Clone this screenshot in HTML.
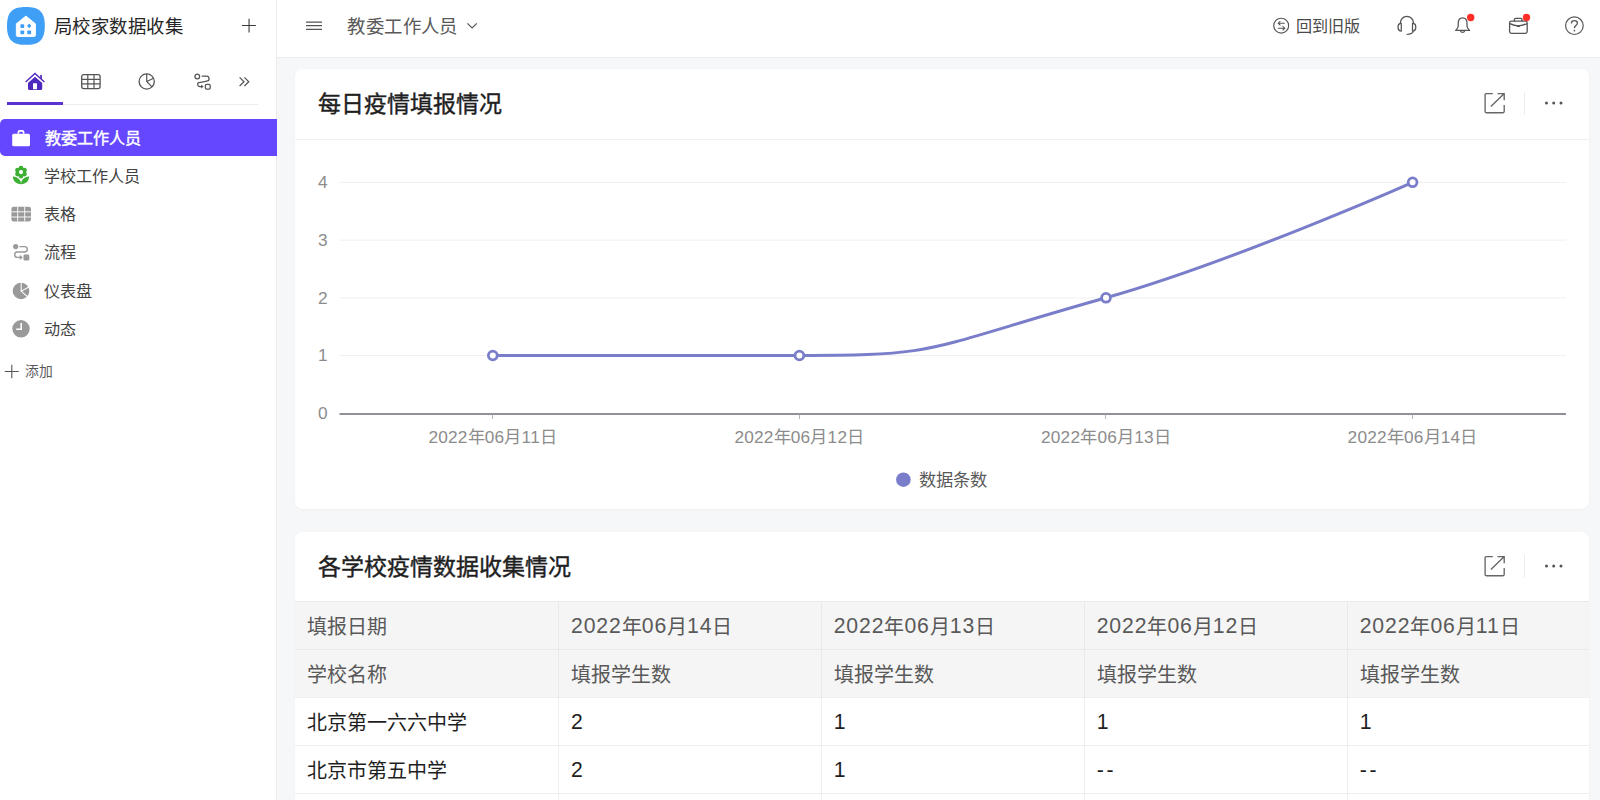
<!DOCTYPE html>
<html lang="zh-CN">
<head>
<meta charset="utf-8">
<title>局校家数据收集</title>
<style>
*{box-sizing:border-box;margin:0;padding:0}
html,body{width:1600px;height:800px;overflow:hidden;background:#f6f7f9;font-family:"Liberation Sans",sans-serif;color:#262626}
.abs{position:absolute}
#sidebar{position:absolute;left:0;top:0;width:277px;height:800px;background:#fff;border-right:1px solid #ebebec}
#header{position:absolute;left:277px;top:0;width:1323px;height:58px;background:#fff;border-bottom:1px solid #ecedef}
.appname{position:absolute;left:53.6px;top:14px;font-size:18.4px;letter-spacing:0.5px;line-height:26px;color:#262626;white-space:nowrap}
.tabline{position:absolute;left:7px;top:103.5px;width:251px;height:1px;background:#ececec}
.tabactive{position:absolute;left:7px;top:102px;width:56px;height:2.6px;background:#5a32d2}
.item{position:absolute;left:0;width:276.8px;height:37px;font-size:16.1px;line-height:37px;color:#434343;white-space:nowrap}
.item span{position:absolute;left:44px;top:0.8px}
.item.sel span{left:44.5px;top:1px}
.item.sel{background:#6547ff;color:#fff;font-weight:500;-webkit-text-stroke:0.4px #fff;letter-spacing:0.15px;border-radius:5px 0 0 5px}
.item svg{position:absolute}
.add{position:absolute;left:25.3px;top:362.3px;letter-spacing:0.2px;font-size:13.8px;line-height:20px;color:#595959}
.htitle{position:absolute;left:70.3px;top:14.1px;font-size:18.4px;letter-spacing:0.42px;line-height:26px;color:#595959;white-space:nowrap}
.hback{position:absolute;left:1018.6px;top:15px;font-size:16.1px;line-height:22px;color:#4a4a4a;white-space:nowrap}
.card{position:absolute;left:294.5px;width:1294.5px;background:#fff;border-radius:8px;box-shadow:0 1px 3px rgba(0,0,0,0.03)}
.ctitle{position:absolute;left:23.5px;font-size:23px;line-height:32px;font-weight:500;-webkit-text-stroke:0.42px #1f1f1f;color:#1f1f1f;white-space:nowrap}
.csep{position:absolute;left:0;width:100%;height:1px;background:#f0f0f0}
.vsep{position:absolute;width:1px;height:23px;background:#ececec}
table{position:absolute;left:0;top:69.5px;border-collapse:collapse;table-layout:fixed;width:1294.5px}
td{height:48px;border-top:1px solid #efefef;border-right:1px solid #efefef;padding:0 0 0 12px;font-size:20px;white-space:nowrap;color:#1f1f1f;vertical-align:middle}
td i{font-style:normal;letter-spacing:0.9px;font-size:21.2px;position:relative;top:1px;line-height:20px}
tr.h td i{top:-1.5px}
td i.m{letter-spacing:2.8px}
td:last-child{border-right:none}
tr.h td{background:#f5f5f5;color:#595959;border-color:#e9e9e9}
</style>
</head>
<body>
<div id="sidebar">
  <!-- logo -->
  <svg class="abs" style="left:6.9px;top:6.9px" width="37.8" height="37.8" viewBox="0 0 40 40">
    <path d="M20 0C33 0 40 4 40 20C40 36 33 40 20 40C7 40 0 36 0 20C0 4 7 0 20 0Z" fill="#3f9ef6"/>
    <path d="M20 9.6L30.1 17.8V30Q30.1 31.2 28.9 31.2H11.1Q9.9 31.2 9.9 30V17.8Z" fill="#fff" stroke="#fff" stroke-width="1" stroke-linejoin="round"/>
    <rect x="14.2" y="18.3" width="4" height="4" rx="0.8" fill="#3f9ef6"/>
    <rect x="21.8" y="18.3" width="3.4" height="3.4" rx="0.6" fill="#3f9ef6" transform="rotate(45 23.5 20)"/>
    <rect x="14.2" y="24.8" width="4" height="4" rx="0.8" fill="#3f9ef6"/>
    <rect x="21.5" y="24.8" width="4" height="4" rx="0.8" fill="#3f9ef6"/>
  </svg>
  <div class="appname">局校家数据收集</div>
  <svg class="abs" style="left:241px;top:18px" width="16" height="16" viewBox="0 0 16 16"><path d="M8.05 0.8V14.6M1 7.5H14.9" stroke="#3a3a3a" stroke-width="1.1" fill="none"/></svg>

  <!-- tabs -->
  <svg class="abs" style="left:25px;top:72px" width="21" height="20" viewBox="0 0 21 20">
    <path d="M0.6 9.9L10 1.5L19.4 9.9" fill="none" stroke="#4f29be" stroke-width="1.35"/>
    <rect x="15.2" y="2.9" width="1.7" height="4" fill="#4f29be"/>
    <path d="M10 4.8L17.2 11.1V16.6Q17.2 18.1 15.7 18.1H4.5Q3 18.1 3 16.6V11.1Z" fill="#4f29be"/>
    <rect x="8" y="11.2" width="4" height="6.1" rx="0.4" fill="#fff"/>
  </svg>
  <svg class="abs" style="left:80px;top:73px" width="22" height="18" viewBox="0 0 22 18">
    <rect x="1.7" y="1.6" width="18.4" height="14" rx="2" fill="none" stroke="#555" stroke-width="1.3"/>
    <path d="M1.7 6.3H20.1M1.7 10.9H20.1M7.8 1.6V15.6M14 1.6V15.6" stroke="#555" stroke-width="1.2" fill="none"/>
  </svg>
  <svg class="abs" style="left:137px;top:72px" width="20" height="20" viewBox="0 0 20 20">
    <circle cx="9.7" cy="9.5" r="7.6" fill="none" stroke="#555" stroke-width="1.3"/>
    <path d="M9.7 1.9V9.5L15 14.9M9.7 9.5L16.6 6.3" stroke="#555" stroke-width="1.2" fill="none"/>
  </svg>
  <svg class="abs" style="left:193px;top:72px" width="20" height="20" viewBox="0 0 20 20">
    <circle cx="4.3" cy="4.4" r="2.35" fill="none" stroke="#555" stroke-width="1.25"/>
    <path d="M9.2 4.2H13.4A2.5 2.5 0 0 1 13.7 9.2C11.2 9.7 9 10 6.6 10.4A2.05 2.05 0 0 0 6.8 14.5H9" stroke="#555" stroke-width="1.25" fill="none" stroke-linecap="round"/>
    <path d="M8.1 12.5L10.6 14.5L8.1 16.5Z" fill="#555"/>
    <rect x="12.4" y="12.3" width="4.8" height="4.8" rx="1.1" fill="none" stroke="#555" stroke-width="1.25"/>
  </svg>
  <svg class="abs" style="left:238px;top:76px" width="12" height="12" viewBox="0 0 12 12"><path d="M1.6 1.4L6 5.7L1.6 10M6.4 1.4L10.8 5.7L6.4 10" stroke="#555" stroke-width="1.2" fill="none"/></svg>
  <div class="tabline"></div>
  <div class="tabactive"></div>

  <!-- items -->
  <div class="item sel" style="top:118.8px">
    <svg style="left:11px;top:9px" width="20" height="20" viewBox="0 0 20 20"><path d="M7.4 5.8V4.3Q7.4 2.9 8.8 2.9H11.2Q12.6 2.9 12.6 4.3V5.8" fill="none" stroke="#fff" stroke-width="1.7"/><rect x="1.2" y="5.7" width="17.8" height="12.6" rx="1.6" fill="#fff"/></svg>
    <span>教委工作人员</span></div>
  <div class="item" style="top:157px">
    <svg style="left:11px;top:8.1px" width="20" height="20" viewBox="0 0 20 20">
      <g fill="#3db034"><circle cx="10" cy="3.2" r="2.45"/><circle cx="10" cy="11" r="2.45"/><circle cx="6.62" cy="5.15" r="2.45"/><circle cx="13.38" cy="5.15" r="2.45"/><circle cx="6.62" cy="9.05" r="2.45"/><circle cx="13.38" cy="9.05" r="2.45"/><circle cx="10" cy="7.1" r="3.8"/>
      <path d="M1.9 11.6C1.9 16 5 19.2 10 19.2C10 15 7 12 1.9 11.6Z"/><path d="M18.1 11.6C18.1 16 15 19.2 10 19.2C10 15 13 12 18.1 11.6Z"/></g>
      <circle cx="10" cy="7.1" r="2.1" fill="#fff"/></svg>
    <span>学校工作人员</span></div>
  <div class="item" style="top:195.4px">
    <svg style="left:11px;top:10.5px" width="21" height="16" viewBox="0 0 21 16"><rect x="0.4" y="0.8" width="19.6" height="14.7" rx="2.2" fill="#9a9a9a"/><path d="M6.7 0.8V15.5M13.7 0.8V15.5M0.4 5.8H20M0.4 11H20" stroke="#fff" stroke-width="0.9" fill="none"/></svg>
    <span>表格</span></div>
  <div class="item" style="top:233.7px">
    <svg style="left:11px;top:8.5px" width="20" height="20" viewBox="0 0 20 20"><circle cx="4.7" cy="4.6" r="2.6" fill="#999"/><path d="M8.4 4.6H13.6A2.7 2.7 0 0 1 13.6 10H6.4A2.7 2.7 0 0 0 6.4 15.4H10" fill="none" stroke="#999" stroke-width="1.4"/><path d="M8.8 12.8L11.8 15.4L8.8 18Z" fill="#999"/><rect x="12.5" y="12.6" width="5.8" height="5.8" rx="1.2" fill="#999"/></svg>
    <span>流程</span></div>
  <div class="item" style="top:272px">
    <svg style="left:11px;top:8.5px" width="20" height="20" viewBox="0 0 20 20"><circle cx="10" cy="10" r="8.3" fill="#999"/><path d="M10.2 1V10.2L18.4 5.8M10.2 10.2L16.6 15.8" fill="none" stroke="#fff" stroke-width="1.05"/></svg>
    <span>仪表盘</span></div>
  <div class="item" style="top:310.4px">
    <svg style="left:11px;top:8.5px" width="20" height="20" viewBox="0 0 20 20"><circle cx="10" cy="9.8" r="8.7" fill="#999"/><path d="M10.2 4V10.2H5.2" fill="none" stroke="#fff" stroke-width="1.6"/></svg>
    <span>动态</span></div>
  <svg class="abs" style="left:4px;top:364px" width="16" height="16" viewBox="0 0 16 16"><path d="M7.8 0.8V14.2M0.8 7.5H14.8" stroke="#555" stroke-width="1.1" fill="none"/></svg>
  <div class="add">添加</div>
</div>

<div id="header">
  <svg class="abs" style="left:28px;top:17px" width="18" height="18" viewBox="0 0 18 18"><path d="M1 5.1H17M1 8.6H17M1 12.4H17" stroke="#555" stroke-width="1.15" fill="none"/></svg>
  <div class="htitle">教委工作人员</div>
  <svg class="abs" style="left:189px;top:21px" width="12" height="10" viewBox="0 0 12 10"><path d="M1.4 2.3L6.1 7L10.8 2.3" stroke="#555" stroke-width="1.2" fill="none"/></svg>
  <!-- swap -->
  <svg class="abs" style="left:994px;top:16px" width="20" height="20" viewBox="0 0 20 20"><circle cx="10.2" cy="9.7" r="7.45" fill="none" stroke="#555" stroke-width="1.15"/><path d="M13.8 7.2H7.2M9.4 5L7.2 7.2L9.4 9.4M6.8 12.2H13.8M11.6 10L13.8 12.2L11.6 14.4" fill="none" stroke="#555" stroke-width="1.05"/></svg>
  <div class="hback">回到旧版</div>
  <!-- headset -->
  <svg class="abs" style="left:1119px;top:14px" width="22" height="22" viewBox="0 0 22 22"><path d="M4.4 9.6V8.8A6.5 6.5 0 0 1 17.4 8.8V9.6" fill="none" stroke="#555" stroke-width="1.25"/><path d="M5.3 9.4H4.5Q2 9.8 2 13.2Q2 16.6 4.5 17H5.3Z" fill="none" stroke="#555" stroke-width="1.25" stroke-linejoin="round"/><path d="M16.5 9.4H17.3Q19.8 9.8 19.8 13.2Q19.8 16.6 17.3 17H16.5Z" fill="none" stroke="#555" stroke-width="1.25" stroke-linejoin="round"/><path d="M17.4 17.2Q16.6 20.2 10.6 20.5" fill="none" stroke="#555" stroke-width="1.25"/></svg>
  <!-- bell -->
  <svg class="abs" style="left:1176px;top:12px" width="24" height="24" viewBox="0 0 24 24"><path d="M9.6 5.9C6.6 5.9 5.2 8.4 5.2 11.4V14.2C5.2 16 3.8 17.2 2.6 18.4H16.6C15.4 17.2 14 16 14 14.2V11.4C14 8.4 12.6 5.9 9.6 5.9Z" fill="none" stroke="#555" stroke-width="1.25" stroke-linejoin="round"/><path d="M7.5 18.9A2.2 2.2 0 0 0 11.7 18.9" fill="none" stroke="#555" stroke-width="1.2"/><circle cx="17.7" cy="5.5" r="3.7" fill="#ff2e26"/></svg>
  <!-- case -->
  <svg class="abs" style="left:1230px;top:12px" width="24" height="24" viewBox="0 0 24 24"><path d="M7.4 9.4V7.6Q7.4 6.4 8.6 6.4H13.8Q15 6.4 15 7.6V9.4" fill="none" stroke="#555" stroke-width="1.3"/><rect x="2.6" y="9.2" width="17.6" height="12.2" rx="1.8" fill="none" stroke="#555" stroke-width="1.3"/><path d="M2.8 11.6Q11.4 16 20 11.6" fill="none" stroke="#555" stroke-width="1.3"/><path d="M9.8 14.2H13" stroke="#555" stroke-width="1.6"/><circle cx="19.5" cy="5.5" r="3.7" fill="#ff2e26"/></svg>
  <!-- help -->
  <svg class="abs" style="left:1286px;top:15px" width="22" height="22" viewBox="0 0 22 22"><circle cx="11.4" cy="10.7" r="8.8" fill="none" stroke="#555" stroke-width="1.2"/><path d="M8.4 8.4Q8.4 5.6 11.4 5.6Q14.4 5.6 14.4 8.2Q14.4 9.6 12.8 10.6Q11.4 11.6 11.4 13.2" fill="none" stroke="#555" stroke-width="1.3"/><circle cx="11.4" cy="15.6" r="0.9" fill="#555"/></svg>
</div>

<!-- card 1 -->
<div class="card" id="c1" style="top:68.5px;height:440px">
  <div class="ctitle" style="top:19px">每日疫情填报情况</div>
  <div class="csep" style="top:70px"></div>
  <div class="vsep" style="left:1229.5px;top:23.5px"></div>
  <svg class="abs" style="left:1188.5px;top:22.3px" width="24" height="24" viewBox="0 0 24 24"><path d="M9.8 2.6H3.2Q2.1 2.6 2.1 3.7V20.6Q2.1 21.7 3.2 21.7H20.1Q21.2 21.7 21.2 20.6V14" fill="none" stroke="#666" stroke-width="1.35"/><path d="M14.5 2.6H21.2V9.3M21 2.8L7.9 15.6" fill="none" stroke="#666" stroke-width="1.35"/></svg>
  <svg class="abs" style="left:1247.5px;top:30.5px" width="24" height="8" viewBox="0 0 24 8"><circle cx="4.5" cy="4" r="1.5" fill="#555"/><circle cx="11.7" cy="4" r="1.5" fill="#555"/><circle cx="19" cy="4" r="1.5" fill="#555"/></svg>

</div>


<!-- chart -->
<svg class="abs" style="left:0;top:0;pointer-events:none" width="1600" height="520" viewBox="0 0 1600 520" font-family="Liberation Sans, sans-serif">
  <g stroke="#f0f0f0" stroke-width="1">
    <path d="M339.5 182.4H1566M339.5 240.1H1566M339.5 297.9H1566M339.5 355.6H1566"/>
  </g>
  <path d="M339.5 413.9H1566" stroke="#6b6b76" stroke-width="1.5"/>
  <path d="M492.5 414.5V419M799.5 414.5V419M1105.5 414.5V419M1412.5 414.5V419" stroke="#b5b5b5" stroke-width="1"/>
  <g fill="#8c8c8c" font-size="17.25" text-anchor="end">
    <text x="327.6" y="188.2">4</text><text x="327.6" y="245.9">3</text><text x="327.6" y="303.7">2</text><text x="327.6" y="361.4">1</text><text x="327.6" y="419">0</text>
  </g>
  <g fill="#8c8c8c" font-size="17.25" text-anchor="middle" letter-spacing="0.2">
    <text x="492.8" y="443.3">2022年06月11日</text><text x="799.4" y="443.3">2022年06月12日</text><text x="1106" y="443.3">2022年06月13日</text><text x="1412.6" y="443.3">2022年06月14日</text>
  </g>
  <path d="M492.8 355.5L799.4 355.5C943.6 355.5 920.3 350.2 1106 297.8C1231.4 262.4 1412.6 182.3 1412.6 182.3" fill="none" stroke="#7a7dc9" stroke-width="3" stroke-linecap="round"/>
  <g fill="#fff" stroke="#7a7dc9" stroke-width="2.8">
    <circle cx="492.8" cy="355.5" r="4.4"/><circle cx="799.4" cy="355.5" r="4.4"/><circle cx="1106" cy="297.8" r="4.4"/><circle cx="1412.6" cy="182.3" r="4.4"/>
  </g>
  <circle cx="903.4" cy="479.7" r="7.3" fill="#7a7dc9"/>
  <text x="918.5" y="486.4" font-size="17.25" fill="#595959" letter-spacing="0.15">数据条数</text>
</svg>

<!-- card 2 -->
<div class="card" id="c2" style="top:531.6px;height:300px;overflow:hidden">
  <div class="ctitle" style="top:19px">各学校疫情数据收集情况</div>
  <div class="vsep" style="left:1229.5px;top:23.5px"></div>
  <svg class="abs" style="left:1188.5px;top:22.3px" width="24" height="24" viewBox="0 0 24 24"><path d="M9.8 2.6H3.2Q2.1 2.6 2.1 3.7V20.6Q2.1 21.7 3.2 21.7H20.1Q21.2 21.7 21.2 20.6V14" fill="none" stroke="#666" stroke-width="1.35"/><path d="M14.5 2.6H21.2V9.3M21 2.8L7.9 15.6" fill="none" stroke="#666" stroke-width="1.35"/></svg>
  <svg class="abs" style="left:1247.5px;top:30.5px" width="24" height="8" viewBox="0 0 24 8"><circle cx="4.5" cy="4" r="1.5" fill="#555"/><circle cx="11.7" cy="4" r="1.5" fill="#555"/><circle cx="19" cy="4" r="1.5" fill="#555"/></svg>

  <table>
    <colgroup><col style="width:264px"><col style="width:262.7px"><col style="width:263px"><col style="width:263px"><col></colgroup>
    <tr class="h"><td>填报日期</td><td><i>2022</i>年<i>06</i>月<i>14</i>日</td><td><i>2022</i>年<i>06</i>月<i>13</i>日</td><td><i>2022</i>年<i>06</i>月<i>12</i>日</td><td><i>2022</i>年<i>06</i>月<i>11</i>日</td></tr>
    <tr class="h"><td>学校名称</td><td>填报学生数</td><td>填报学生数</td><td>填报学生数</td><td>填报学生数</td></tr>
    <tr><td>北京第一六六中学</td><td><i>2</i></td><td><i>1</i></td><td><i>1</i></td><td><i>1</i></td></tr>
    <tr><td>北京市第五中学</td><td><i>2</i></td><td><i>1</i></td><td><i class="m">--</i></td><td><i class="m">--</i></td></tr>
    <tr><td>&nbsp;</td><td></td><td></td><td></td><td></td></tr>
  </table>
</div>
</body>
</html>
